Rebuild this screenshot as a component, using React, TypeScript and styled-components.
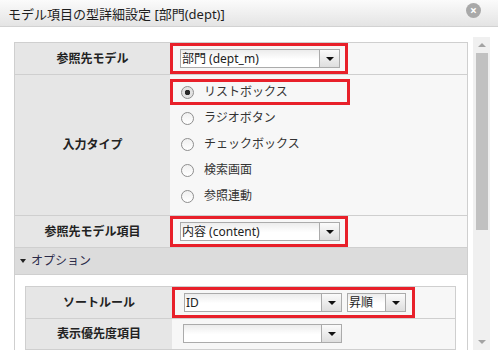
import React from 'react'
import styled, { createGlobalStyle } from 'styled-components'

const GlobalStyle = createGlobalStyle`
  html, body {
    margin: 0;
    padding: 0;
    background: #fff;
    overflow: hidden;
  }
  body {
    font-family: "Noto Sans", "Noto Sans CJK JP", sans-serif;
    font-size: 12px;
    color: #222;
  }
`

const Dialog = styled.div`
  width: 498px;
  height: 350px;
  display: flex;
  flex-direction: column;
  overflow: hidden;
`

const TitleBar = styled.div`
  height: 26px;
  flex: none;
  display: flex;
  align-items: center;
  justify-content: space-between;
  padding: 0 17px 0 8px;
  background: linear-gradient(#fbfbfb, #e4e4e4);
  border-bottom: 1px solid #d2d2d2;
`

const Title = styled.div`
  font-size: 13px;
  line-height: 16px;
  color: #1e1e1e;
  margin-top: 1px;
`

const CloseButton = styled.div`
  width: 15px;
  height: 15px;
  border-radius: 50%;
  background: #a9a9a9;
  color: #fff;
  font-size: 12px;
  font-weight: bold;
  line-height: 15px;
  text-align: center;
  margin-top: -6px;
`

const Body = styled.div`
  flex: 1;
  min-height: 0;
  display: flex;
`

const Content = styled.div`
  flex: 1;
  padding: 15px 5px 0 14px;
  overflow: hidden;
`

const Scrollbar = styled.div`
  width: 17px;
  margin: 10px 8px 0 0;
  background: #f0f0f0;
  display: flex;
  flex-direction: column;
  align-items: center;
`

const ScrollArrow = styled.div<{ $down?: boolean }>`
  width: 17px;
  height: 16px;
  flex: none;
  display: flex;
  align-items: center;
  justify-content: center;
  &::after {
    content: '';
    border-left: 4px solid transparent;
    border-right: 4px solid transparent;
    ${(p) => (p.$down ? 'border-top: 4px solid #a3a3a3;' : 'border-bottom: 4px solid #a3a3a3;')}
  }
`

const ScrollThumb = styled.div`
  width: 12px;
  height: 177px;
  background: #c1c1c1;
  flex: none;
`

const ScrollSpacer = styled.div`
  flex: 1;
`

const FormTable = styled.div`
  border: 1px solid #cfcfcf;
  border-bottom: none;
`

const Row = styled.div<{ $labelWidth: number }>`
  display: grid;
  grid-template-columns: ${(p) => p.$labelWidth}px 1fr;
  border-bottom: 1px solid #cfcfcf;
`

const Label = styled.div`
  background: #e6e6e6;
  font-weight: bold;
  color: #222;
  display: flex;
  align-items: center;
  justify-content: center;
  line-height: 16px;
`

const Value = styled.div<{ $pad?: string }>`
  background: #f7f7f7;
  padding: ${(p) => p.$pad || '0'};
  display: flex;
  flex-direction: column;
  align-items: flex-start;
`

const Highlight = styled.div<{ $pad: string; $width?: number }>`
  border: 3px solid #e8202a;
  padding: ${(p) => p.$pad};
  display: flex;
  align-items: center;
  gap: 5px;
  ${(p) => (p.$width ? `width: ${p.$width}px; box-sizing: border-box;` : '')}
`

const SelectBox = styled.div<{ $width: number }>`
  width: ${(p) => p.$width}px;
  height: 19px;
  box-sizing: border-box;
  border: 1px solid #ababab;
  background: linear-gradient(#ececec, #fff 55%);
  display: flex;
  align-items: stretch;
`

const SelectText = styled.div`
  flex: 1;
  padding-left: 1px;
  line-height: 17px;
  color: #222;
  white-space: nowrap;
  overflow: hidden;
`

const SelectButton = styled.div`
  width: 19px;
  flex: none;
  border-left: 1px solid #ababab;
  background: linear-gradient(#fbfbfb, #dedede);
  display: flex;
  align-items: center;
  justify-content: center;
  &::after {
    content: '';
    border-left: 4px solid transparent;
    border-right: 4px solid transparent;
    border-top: 4px solid #111;
  }
`

const RadioItem = styled.div<{ $indent: number }>`
  height: 20px;
  padding: 3px 0 3px ${(p) => p.$indent}px;
  display: flex;
  align-items: center;
  gap: 10px;
  color: #333;
  line-height: 16px;
`

const Highlighted = styled.div`
  height: 20px;
  display: flex;
  align-items: center;
  gap: 10px;
  padding-left: 8px;
  color: #333;
  line-height: 16px;
`

const RadioCircle = styled.span<{ $checked?: boolean }>`
  width: 13px;
  height: 13px;
  box-sizing: border-box;
  border-radius: 50%;
  border: 1px solid #8e8e8e;
  background: ${(p) => (p.$checked ? 'radial-gradient(circle, #2a2a2a 0 2.5px, #e2e2e2 3px)' : 'linear-gradient(#f0f0f0, #fff)')};
  flex: none;
`

const SectionHeader = styled.div`
  height: 26px;
  background: #dcdcdc;
  border-bottom: 1px solid #cfcfcf;
  display: flex;
  align-items: center;
  padding-left: 5px;
  gap: 5px;
  color: #2a2a48;
  line-height: 16px;
  &::before {
    content: '';
    border-left: 3px solid transparent;
    border-right: 3px solid transparent;
    border-top: 4px solid #222;
  }
`

const SectionBody = styled.div`
  background: #fff;
  padding: 11px 11px 0 10px;
`

const Select: React.FC<{ width: number; value?: string }> = ({ width, value }) => (
  <SelectBox $width={width}>
    <SelectText>{value}</SelectText>
    <SelectButton />
  </SelectBox>
)

const inputTypes = ['ラジオボタン', 'チェックボックス', '検索画面', '参照連動']

export default function App() {
  return (
    <Dialog>
      <GlobalStyle />
      <TitleBar>
        <Title>モデル項目の型詳細設定 [部門(dept)]</Title>
        <CloseButton>×</CloseButton>
      </TitleBar>
      <Body>
        <Content>
          <FormTable>
            <Row $labelWidth={155}>
              <Label>参照先モデル</Label>
              <Value>
                <Highlight $pad="3px 5px 3px 7px">
                  <Select width={160} value="部門 (dept_m)" />
                </Highlight>
              </Value>
            </Row>
            <Row $labelWidth={155}>
              <Label>入力タイプ</Label>
              <Value $pad="4px 0 6px 0">
                <Highlight $pad="0" $width={180}>
                  <Highlighted>
                    <RadioCircle $checked />
                    リストボックス
                  </Highlighted>
                </Highlight>
                {inputTypes.map((t) => (
                  <RadioItem key={t} $indent={11}>
                    <RadioCircle />
                    {t}
                  </RadioItem>
                ))}
              </Value>
            </Row>
            <Row $labelWidth={155}>
              <Label>参照先モデル項目</Label>
              <Value>
                <Highlight $pad="3px 5px 3px 7px">
                  <Select width={160} value="内容 (content)" />
                </Highlight>
              </Value>
            </Row>
            <SectionHeader>オプション</SectionHeader>
            <SectionBody>
              <FormTable>
                <Row $labelWidth={146}>
                  <Label>ソートルール</Label>
                  <Value>
                    <Highlight $pad="3px 6px 3px 9px">
                      <Select width={158} value="ID" />
                      <Select width={59} value="昇順" />
                    </Highlight>
                  </Value>
                </Row>
                <Row $labelWidth={146}>
                  <Label>表示優先度項目</Label>
                  <Value $pad="5px 0 6px 11px">
                    <Select width={159} />
                  </Value>
                </Row>
                <Row $labelWidth={146}>
                  <Label />
                  <Value $pad="5px 0 6px 11px">
                    <Select width={159} />
                  </Value>
                </Row>
              </FormTable>
            </SectionBody>
          </FormTable>
        </Content>
        <Scrollbar>
          <ScrollArrow />
          <ScrollThumb />
          <ScrollSpacer />
          <ScrollArrow $down />
        </Scrollbar>
      </Body>
    </Dialog>
  )
}
